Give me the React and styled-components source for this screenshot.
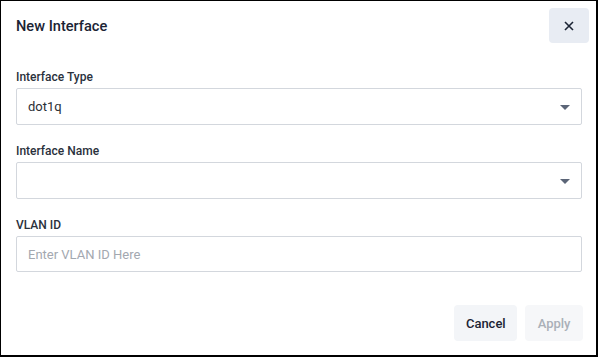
import React from "react";
import styled, { createGlobalStyle } from "styled-components";

const GlobalStyle = createGlobalStyle`
  html, body {
    margin: 0;
    padding: 0;
    background: #fff;
  }
  body {
    font-family: Roboto, "Liberation Sans", Arial, sans-serif;
  }
`;

const Dialog = styled.div`
  box-sizing: border-box;
  width: 598px;
  height: 357px;
  border-style: solid;
  border-color: #000;
  border-width: 1px 2px 2px 1px;
  background: #fff;
  display: flex;
  flex-direction: column;
  padding: 7px 14px 14px 15px;
`;

const Header = styled.div`
  display: flex;
  align-items: center;
  justify-content: space-between;
  height: 35px;
  margin-right: -7px;
`;

const Title = styled.h2`
  margin: 0;
  font-size: 14.6px;
  font-weight: 500;
  color: #1b2434;
`;

const CloseButton = styled.button`
  width: 40px;
  height: 35px;
  border: none;
  border-radius: 4px;
  background: #e8ecf3;
  display: flex;
  align-items: center;
  justify-content: center;
  padding: 0;
  cursor: pointer;
`;

const Body = styled.div`
  display: flex;
  flex-direction: column;
  gap: 18px;
  margin-top: 26px;
`;

const Field = styled.div`
  display: flex;
  flex-direction: column;
  gap: 3px;
`;

const Label = styled.label`
  font-size: 12px;
  line-height: 16px;
  font-weight: 500;
  color: #2a313c;
`;

const Box = styled.div`
  box-sizing: border-box;
  height: ${(p) => p.h}px;
  border: 1px solid #d3d7dd;
  border-radius: 2px;
  display: flex;
  align-items: center;
  justify-content: space-between;
  padding: 0 11px 0 11px;
  font-size: 13px;
  color: ${(p) => (p.placeholder ? "#a3a8b0" : "#2b2f36")};
`;

const Caret = styled.span`
  width: 0;
  height: 0;
  border-left: 5px solid transparent;
  border-right: 5px solid transparent;
  border-top: 5px solid #5b6577;
  margin-top: 1px;
`;

const Footer = styled.div`
  margin-top: auto;
  margin-right: -1px;
  display: flex;
  justify-content: flex-end;
  gap: 8px;
`;

const Button = styled.button`
  height: 36px;
  border: none;
  border-radius: 4px;
  padding: 0 ${(p) => (p.disabled ? 12.5 : 11.5)}px;
  font-family: inherit;
  font-size: 13px;
  font-weight: 500;
  background: ${(p) => (p.disabled ? "#f6f7f9" : "#f3f5f8")};
  color: ${(p) => (p.disabled ? "#aab0b8" : "#1b2434")};
`;

function SelectBox({ value }) {
  return (
    <Box h={37}>
      <span>{value}</span>
      <Caret />
    </Box>
  );
}

export default function App() {
  return (
    <>
      <GlobalStyle />
      <Dialog>
        <Header>
          <Title>New Interface</Title>
          <CloseButton aria-label="Close">
            <svg width="10" height="10" viewBox="0 0 10 10">
              <path d="M1 1L9 9M9 1L1 9" stroke="#1b2434" strokeWidth="1.6" />
            </svg>
          </CloseButton>
        </Header>
        <Body>
          <Field>
            <Label>Interface Type</Label>
            <SelectBox value="dot1q" />
          </Field>
          <Field>
            <Label>Interface Name</Label>
            <SelectBox value="" />
          </Field>
          <Field>
            <Label>VLAN ID</Label>
            <Box h={36} placeholder="true">Enter VLAN ID Here</Box>
          </Field>
        </Body>
        <Footer>
          <Button>Cancel</Button>
          <Button disabled>Apply</Button>
        </Footer>
      </Dialog>
    </>
  );
}
